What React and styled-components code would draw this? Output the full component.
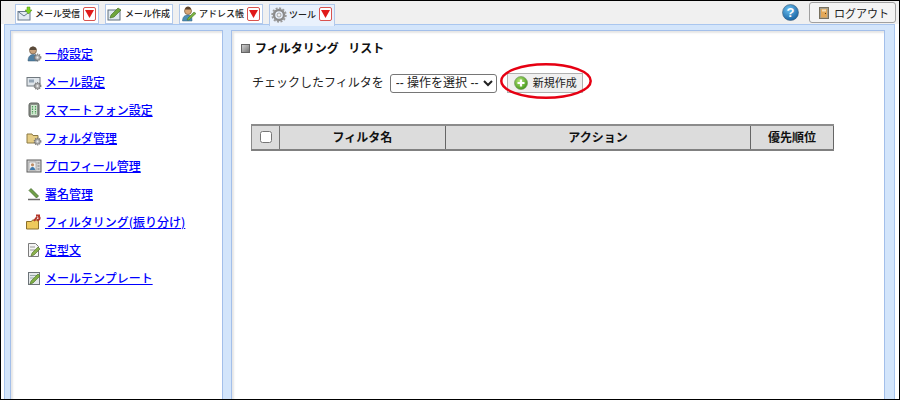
import React from "react"
import styled, { createGlobalStyle } from "styled-components"

const GlobalStyle = createGlobalStyle`
  html, body { margin: 0; padding: 0; background: #fff; }
  #root { width: 900px; height: 400px; overflow: hidden; }
  * { box-sizing: border-box; }
`

const Caret = () => (
  <CaretBox>
    <svg width="9" height="8" viewBox="0 0 9 8"><path d="M0 0h9L4.500 8z" fill="#e01a1a" /></svg>
  </CaretBox>
)

const SmallGear = ({ x = 11.5, y = 11.5, r = 2.7 }) => (
  <g>
    <circle cx={x} cy={y} r={r + 0.6} fill="none" stroke="#777" strokeWidth="1.200" strokeDasharray="1.200 .9" />
    <circle cx={x} cy={y} r={r} fill="#b4b4b4" stroke="#666" strokeWidth=".6" />
    <circle cx={x} cy={y} r={r / 3} fill="#eee" />
  </g>
)

const MailInIcon = () => (
  <svg width="16" height="16" viewBox="0 0 16 16">
    <rect x="1" y="5.500" width="12" height="8.500" fill="#e3ebf3" stroke="#66788b" />
    <path d="M1 5.500l6 4.500 6-4.500" fill="none" stroke="#66788b" />
    <path d="M10 1h3v3h2l-3.500 4L8 4h2z" fill="#7ed321" stroke="#4c8f10" strokeWidth=".5" />
  </svg>
)

const MailNewIcon = () => (
  <svg width="16" height="16" viewBox="0 0 16 16">
    <rect x="1" y="4" width="12" height="10" fill="#dfe8ee" stroke="#5f6f7c" />
    <path d="M3 12l1-3 7-7 3 2-7 7z" fill="#6fa53a" stroke="#3d6a1c" strokeWidth=".6" />
  </svg>
)

const AddressIcon = () => (
  <svg width="16" height="16" viewBox="0 0 16 16">
    <circle cx="7" cy="5" r="3.500" fill="#d9a777" stroke="#7a5a3a" strokeWidth=".7" />
    <path d="M4 3.500c0-2 1.500-3 3-3s3 1 3 3z" fill="#5b4028" />
    <path d="M1.500 15c0-4 2-6 5.500-6s4 2 4 6z" fill="#4d8fb5" stroke="#35617c" strokeWidth=".5" />
    <path d="M6 14l1-2 6-6 2 1.500-7 6.500z" fill="#79b13f" stroke="#3f6d1e" strokeWidth=".5" />
  </svg>
)

const GearIcon = () => (
  <svg width="16" height="16" viewBox="0 0 16 16">
    <circle cx="8" cy="8" r="5" fill="none" stroke="#8b8b8b" strokeWidth="2.400" />
    <circle cx="8" cy="8" r="6.700" fill="none" stroke="#9a9a9a" strokeWidth="2" strokeDasharray="2 1.500" />
    <circle cx="8" cy="8" r="2" fill="#efefef" stroke="#777" strokeWidth=".6" />
  </svg>
)

const HelpIcon = () => (
  <svg width="17" height="17" viewBox="0 0 17 17">
    <defs>
      <radialGradient id="helpBall" cx="40%" cy="30%" r="75%">
        <stop offset="0" stopColor="#6cc0f0" />
        <stop offset="1" stopColor="#155f9f" />
      </radialGradient>
    </defs>
    <circle cx="8.500" cy="8.500" r="8" fill="url(#helpBall)" stroke="#44627a" strokeWidth=".6" />
    <text x="8.500" y="13" textAnchor="middle" fontSize="13" fontWeight="700" fontFamily="Liberation Sans" fill="#fff">?</text>
  </svg>
)

const DoorIcon = () => (
  <svg width="10" height="12" viewBox="0 0 10 12">
    <rect x=".5" y=".5" width="9" height="11" fill="#a8a08c" stroke="#77705f" />
    <rect x="2" y="2" width="6" height="8.500" fill="#e4a857" />
    <rect x="3" y="2.500" width="4" height="2" fill="#f5dcb2" />
    <rect x="6" y="6" width="1" height="1" fill="#5b3b12" />
  </svg>
)

const MenuIcon = ({ kind }) => {
  if (kind === "user") {
    return (
      <svg width="16" height="16" viewBox="0 0 16 16">
        <circle cx="7" cy="4.500" r="3.500" fill="#c9a27c" stroke="#6c5a48" strokeWidth=".7" />
        <path d="M3.500 4c0-2 1.500-3.500 3.500-3.500S10.500 2 10.500 4z" fill="#5a4a3a" />
        <path d="M2 15c0-4 2-6.500 5-6.500s5 2.500 5 6.500z" fill="#4f7fa3" stroke="#3a5870" strokeWidth=".5" />
        <SmallGear />
      </svg>
    )
  }
  if (kind === "mail") {
    return (
      <svg width="16" height="16" viewBox="0 0 16 16">
        <rect x="1" y="3.500" width="13" height="8.500" fill="#dfe5ea" stroke="#70787f" />
        <rect x="3" y="5.500" width="5" height="3" fill="#93a4b3" />
        <SmallGear y={12} />
      </svg>
    )
  }
  if (kind === "phone") {
    return (
      <svg width="16" height="16" viewBox="0 0 16 16">
        <rect x="3" y="1" width="10" height="14" rx="2" fill="#8b9189" stroke="#5f635e" />
        <rect x="5" y="3" width="6" height="10" fill="#cfe8cf" />
        <path d="M6.500 4v8M9.500 4v8" stroke="#4f9a5b" strokeWidth="1.200" strokeDasharray="1.500 1" />
      </svg>
    )
  }
  if (kind === "folder") {
    return (
      <svg width="16" height="16" viewBox="0 0 16 16">
        <path d="M1 4h5l1 1.500h5V13H1z" fill="#e6cd85" stroke="#8c7a45" />
        <SmallGear />
      </svg>
    )
  }
  if (kind === "profile") {
    return (
      <svg width="16" height="16" viewBox="0 0 16 16">
        <rect x="1" y="2" width="14" height="12" fill="#d4d4d4" stroke="#5d5d5d" />
        <rect x="3" y="4" width="7" height="8" fill="#f2f2f2" stroke="#777" strokeWidth=".5" />
        <circle cx="6.500" cy="6.800" r="1.600" fill="#bd8d66" />
        <path d="M4 12c0-2 1-3 2.500-3S9 10 9 12z" fill="#3f79ad" />
        <path d="M11.500 5h2M11.500 8h2M11.500 11h2" stroke="#777" />
      </svg>
    )
  }
  if (kind === "sign") {
    return (
      <svg width="16" height="16" viewBox="0 0 16 16">
        <path d="M5 2.500l7.500 7.500-2 2L3 4.500z" fill="#6f9f46" stroke="#3f6427" strokeWidth=".7" />
        <path d="M2 13.500h12" stroke="#6a6a6a" strokeWidth="1.500" />
      </svg>
    )
  }
  if (kind === "filter") {
    return (
      <svg width="16" height="16" viewBox="0 0 16 16">
        <path d="M0.500 7.500h5l1-1.500h6v9h-12z" fill="#eec95c" stroke="#8a6f2a" />
        <path d="M8 7l3-4M10 1.500h4M12 2.500c2 0 2 2 1 3l-2 1" fill="none" stroke="#b3372b" strokeWidth="2" />
      </svg>
    )
  }
  if (kind === "doc") {
    return (
      <svg width="16" height="16" viewBox="0 0 16 16">
        <path d="M2.500 1.500h7l3 3v10h-10z" fill="#f5f5f5" stroke="#7b7b7b" />
        <path d="M4 5h5M4 8h5" stroke="#999" />
        <path d="M5 14l1-3 6-6 2 2-6 6z" fill="#8ab04c" stroke="#4d6d22" strokeWidth=".6" />
      </svg>
    )
  }
  return (
    <svg width="16" height="16" viewBox="0 0 16 16">
      <rect x="2.500" y="2.500" width="11" height="12" fill="#e4e8ea" stroke="#6c7378" />
      <path d="M4 5.500h7M4 8h4" stroke="#9aa" />
      <path d="M4 14l1-3 7-7 2 2-7 7z" fill="#7fae45" stroke="#446d1e" strokeWidth=".6" />
    </svg>
  )
}

const tabs = [
  { label: "メール受信", icon: <MailInIcon />, caret: true },
  { label: "メール作成", icon: <MailNewIcon /> },
  { label: "アドレス帳", icon: <AddressIcon />, caret: true },
  { label: "ツール", icon: <GearIcon />, caret: true, active: true },
]

const menu = [
  { label: "一般設定", kind: "user" },
  { label: "メール設定", kind: "mail" },
  { label: "スマートフォン設定", kind: "phone" },
  { label: "フォルダ管理", kind: "folder" },
  { label: "プロフィール管理", kind: "profile" },
  { label: "署名管理", kind: "sign" },
  { label: "フィルタリング(振り分け)", kind: "filter" },
  { label: "定型文", kind: "doc" },
  { label: "メールテンプレート", kind: "template" },
]

const App = () => {
  return (
    <>
      <GlobalStyle />
      <Frame>
        <TopBar>
          <Tabs>
            {tabs.map((tab) => (
              <Tab key={tab.label} $active={tab.active}>
                {tab.icon}
                <TabLabel>{tab.label}</TabLabel>
                {tab.caret && <Caret />}
              </Tab>
            ))}
          </Tabs>
          <Tools>
            <HelpIcon />
            <Logout>
              <DoorIcon />
              ログアウト
            </Logout>
          </Tools>
        </TopBar>
        <Workspace>
          <Sidebar>
            {menu.map((item) => (
              <MenuRow key={item.label}>
                <MenuIconBox><MenuIcon kind={item.kind} /></MenuIconBox>
                <MenuLink href="#">{item.label}</MenuLink>
              </MenuRow>
            ))}
          </Sidebar>
          <Main>
            <Heading>
              <HeadingMark />
              フィルタリング&nbsp;&nbsp;リスト
            </Heading>
            <ActionRow>
              <ActionText>チェックしたフィルタを</ActionText>
              <ActionSelect defaultValue="none">
                <option value="none">-- 操作を選択 --</option>
              </ActionSelect>
              <NewButton>
                <PlusBall>
                  <svg width="14" height="14" viewBox="0 0 14 14">
                    <defs>
                      <radialGradient id="plusBall" cx="40%" cy="35%" r="70%">
                        <stop offset="0" stopColor="#b5e67a" />
                        <stop offset="1" stopColor="#3f9416" />
                      </radialGradient>
                    </defs>
                    <circle cx="7" cy="7" r="6.500" fill="url(#plusBall)" stroke="#6a8f55" strokeWidth=".6" />
                    <path d="M7 3.500v7M3.500 7h7" stroke="#fff" strokeWidth="2.200" />
                  </svg>
                </PlusBall>
                <ActionText>新規作成</ActionText>
                <RedRing viewBox="0 0 92 36">
                  <ellipse cx="46" cy="18" rx="44.700" ry="16.700" fill="none" stroke="#e60012" strokeWidth="2.500" />
                </RedRing>
              </NewButton>
            </ActionRow>
            <FilterTable>
              <thead>
                <tr>
                  <CheckCell><CheckBox type="checkbox" /></CheckCell>
                  <HeadCell $width={166}>フィルタ名</HeadCell>
                  <HeadCell $width={305}>アクション</HeadCell>
                  <HeadCell $width={83}>優先順位</HeadCell>
                </tr>
              </thead>
            </FilterTable>
          </Main>
        </Workspace>
      </Frame>
    </>
  )
}

const Frame = styled.div`
  width: 900px;
  height: 400px;
  overflow: hidden;
  display: flex;
  flex-direction: column;
  border: 1px solid #000;
  background: #fff;
  font-family: "Noto Sans CJK JP", "Liberation Sans", sans-serif;
`

const TopBar = styled.div`
  height: 23px;
  flex: none;
  display: flex;
  justify-content: space-between;
  align-items: flex-start;
  background: #f0f0f0;
  padding: 1px 3px 0 14px;
`

const Tabs = styled.div`
  display: flex;
  gap: 6px;
  margin-top: 2px;
`

const Tab = styled.div`
  height: ${(p) => (p.$active ? "22px" : "20px")};
  display: flex;
  align-items: center;
  gap: 2px;
  padding: 0 2px 0 1px;
  background: ${(p) => (p.$active ? "#e9f1fc" : "#fff")};
  border: 1px solid #b3c9ea;
  border-bottom: ${(p) => (p.$active ? "none" : "1px solid #b3c9ea")};
  position: relative;
  z-index: 1;
  ${(p) => p.$active && "align-items: flex-start; padding-top: 2px;"}
`

const TabLabel = styled.span`
  font-size: 9px;
  line-height: 16px;
  font-weight: 500;
  padding-bottom: 1px;
  color: #222;
  white-space: nowrap;
`

const CaretBox = styled.span`
  width: 13px;
  height: 14px;
  margin-left: 1px;
  display: flex;
  align-items: center;
  justify-content: center;
  background: #fff;
  border: 1px solid #d9534f;
  border-radius: 2px;
`

const Tools = styled.div`
  display: flex;
  align-items: center;
  gap: 10px;
`

const Logout = styled.div`
  width: 87px;
  height: 21px;
  display: flex;
  align-items: center;
  gap: 5px;
  padding-left: 9px;
  font-size: 11px;
  color: #222;
  background: #f4f4f4;
  border: 1px solid #a0a0a0;
  border-radius: 3px;
`

const Workspace = styled.div`
  flex: 1;
  min-height: 0;
  display: flex;
  gap: 8px;
  background: #d3e5fb;
  padding: 5px 9px 0 5px;
  border: 1px solid #a9c6ef;
  border-bottom: none;
  margin: 0 4px 0 3px;
`

const Sidebar = styled.nav`
  width: 213px;
  flex: none;
  display: flex;
  flex-direction: column;
  padding: 9px 0 0 15px;
  background: #fff;
  border: 1px solid #a3bfea;
  border-bottom: none;
  box-shadow: inset 2px 2px 2px #e6e6e6;
`

const MenuRow = styled.div`
  height: 28px;
  flex: none;
  display: flex;
  align-items: center;
  gap: 3px;
`

const MenuIconBox = styled.span`
  width: 16px;
  height: 16px;
  display: flex;
  align-items: center;
  justify-content: center;
`

const MenuLink = styled.a`
  font-size: 12px;
  font-weight: 500;
  line-height: 16px;
  color: #0000ff;
  text-decoration: underline;
  white-space: nowrap;
`

const Main = styled.main`
  flex: 1;
  padding: 10px 0 0 9px;
  background: #fff;
  border: 1px solid #a3bfea;
  border-bottom: none;
  box-shadow: inset 2px 2px 2px #e6e6e6;
  min-width: 0;
`

const Heading = styled.h2`
  margin: 0;
  display: flex;
  align-items: center;
  gap: 5px;
  font-size: 12px;
  font-weight: 700;
  line-height: 14px;
  word-spacing: 2px;
  color: #111;
`

const HeadingMark = styled.span`
  width: 9px;
  height: 9px;
  flex: none;
  background: linear-gradient(135deg, #d0d0d0, #777);
  border: 1px solid #666;
`

const ActionRow = styled.div`
  display: flex;
  align-items: center;
  height: 20px;
  margin: 18px 0 0 11px;
  font-size: 12px;
  color: #222;
`

const ActionText = styled.span`
  line-height: 14px;
  padding-bottom: 3px;
`

const ActionSelect = styled.select`
  width: 107px;
  height: 19px;
  margin-left: 6px;
  padding: 0 0 0 1px;
  font: 12px "Liberation Sans", "Noto Sans CJK JP", sans-serif;
  color: #222;
  background: #fff;
  border: 1px solid #767676;
  border-radius: 3px;
`

const NewButton = styled.div`
  position: relative;
  width: 76px;
  height: 20px;
  margin-left: 10px;
  display: flex;
  align-items: center;
  gap: 5px;
  padding-left: 6px;
  font-size: 11px;
  color: #222;
  background: #f0f0f0;
  border: 1px solid #b0b0b0;
`

const PlusBall = styled.span`
  display: flex;
`

const RedRing = styled.svg`
  position: absolute;
  left: -8px;
  top: -11px;
  width: 92px;
  height: 36px;
  pointer-events: none;
`

const FilterTable = styled.table`
  margin: 31px 0 0 10px;
  width: 582px;
  height: 27px;
  border-collapse: collapse;
  table-layout: fixed;
  background: #dcdcdc;
`

const CheckCell = styled.th`
  width: 28px;
  padding: 0 0 2px;
  text-align: center;
  border-style: solid;
  border-color: #8c8c8c #777 #808080 #8c8c8c;
  border-width: 2px 1px 2px 1px;
`

const CheckBox = styled.input`
  display: block;
  width: 12px;
  height: 12px;
  margin: 0 auto;
`

const HeadCell = styled.th`
  width: ${(p) => p.$width}px;
  padding: 0 0 2px;
  font-size: 12px;
  line-height: 14px;
  font-weight: 700;
  text-align: center;
  color: #111;
  border-style: solid;
  border-color: #8c8c8c #666 #808080 #777;
  border-width: 2px 1px 2px 1px;
`

export default App
